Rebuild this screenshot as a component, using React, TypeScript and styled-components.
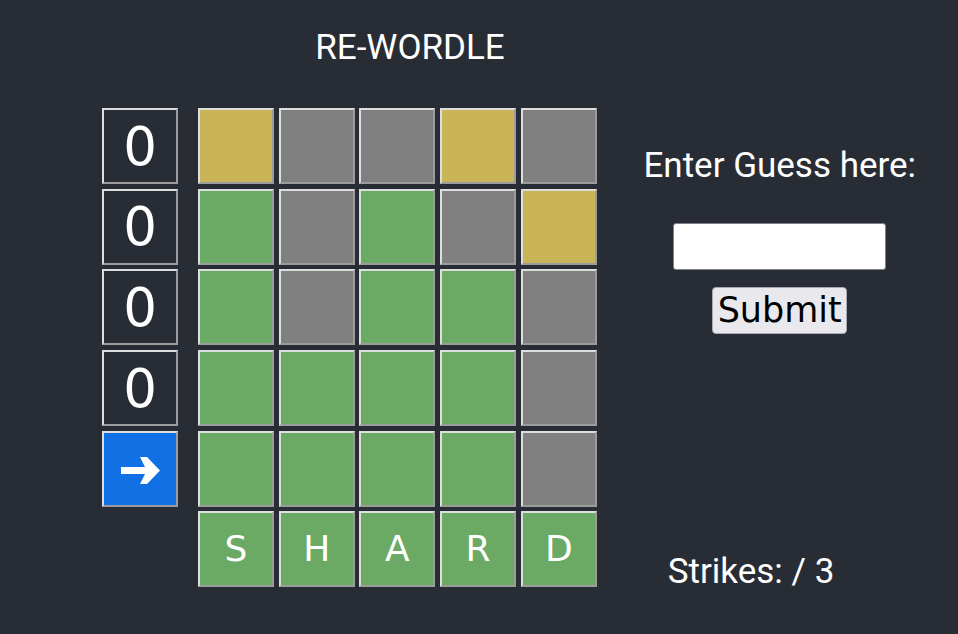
import { FC } from "react";
import styled, { createGlobalStyle } from "styled-components";

const GlobalStyle = createGlobalStyle`
  html, body {
    margin: 0;
    padding: 0;
    background: #282c34;
  }
  body {
    font-family: Roboto, "Noto Sans", sans-serif;
    color: #ffffff;
  }
`;

type Tone = "green" | "yellow" | "gray";

const toneColor: Record<Tone, string> = {
  green: "#6aaa64",
  yellow: "#c9b458",
  gray: "#808080",
};

const Page = styled.main`
  width: 958px;
  min-height: 634px;
  padding-top: 27px;
  box-sizing: border-box;
`;

const Header = styled.h1`
  width: 820px;
  margin: 0;
  text-align: center;
  font-size: 35px;
  font-weight: 400;
  line-height: normal;
`;

const Main = styled.section`
  display: flex;
  flex-direction: row;
  align-items: stretch;
  margin-top: 40px;
  padding-left: 102px;
`;

const Board = styled.div`
  display: flex;
  flex-direction: row;
  align-items: flex-start;
  gap: 20px;
`;

const ScoreColumn = styled.div`
  display: flex;
  flex-direction: column;
  gap: 4.7px;
`;

const Cell = styled.div`
  width: 76px;
  height: 76px;
  box-sizing: border-box;
  border: 2px solid;
  border-color: #dedede #9c9c9c #9c9c9c #dedede;
  display: flex;
  align-items: center;
  justify-content: center;
  font-family: "DejaVu Sans", Verdana, sans-serif;
  color: #ffffff;
`;

const ScoreBox = styled(Cell)<{ $active?: boolean }>`
  background: ${({ $active }) => ($active ? "#1170e3" : "transparent")};
  font-size: 53px;
  line-height: 1;
`;

const Grid = styled.div`
  display: grid;
  grid-template-columns: repeat(5, 76px);
  grid-auto-rows: 76px;
  gap: 4.7px;
`;

const Tile = styled(Cell)<{ $tone: Tone }>`
  background: ${({ $tone }) => toneColor[$tone]};
  font-size: 36px;
  line-height: 1;
`;

const Panel = styled.aside`
  width: 280px;
  margin-left: 43px;
  display: flex;
  flex-direction: column;
  align-items: center;
  padding-top: 37px;
`;

const Prompt = styled.label`
  font-size: 35px;
  line-height: normal;
`;

const GuessInput = styled.input`
  width: 213px;
  height: 47px;
  box-sizing: border-box;
  margin-top: 37px;
  background: #ffffff;
  border: 1px solid #80808e;
  border-radius: 3px;
  font-size: 24px;
`;

const SubmitButton = styled.button`
  width: 135px;
  height: 47px;
  box-sizing: border-box;
  margin-top: 17px;
  padding: 0;
  background: #e9e9ed;
  border: 1px solid #a9a9b2;
  border-radius: 4px;
  color: #000000;
  font-family: "DejaVu Sans", Verdana, sans-serif;
  font-size: 35px;
  line-height: 1;
`;

const Strikes = styled.p`
  align-self: flex-start;
  margin: auto 0 -5px 28px;
  font-size: 35px;
  line-height: normal;
`;

const ArrowIcon: FC = () => (
  <svg width="72" height="72" viewBox="0 0 72 72" aria-hidden="true">
    <path
      d="M17 34 H41 L36 24 H43 L56 37.5 L43 51 H36 L41 41 H17 Z"
      fill="#ffffff"
    />
  </svg>
);

const rows: Tone[][] = [
  ["yellow", "gray", "gray", "yellow", "gray"],
  ["green", "gray", "green", "gray", "yellow"],
  ["green", "gray", "green", "green", "gray"],
  ["green", "green", "green", "green", "gray"],
  ["green", "green", "green", "green", "gray"],
];

const answer = ["S", "H", "A", "R", "D"];
const scores = [0, 0, 0, 0];

const App: FC = () => {
  return (
    <>
      <GlobalStyle />
      <Page>
        <Header>RE-WORDLE</Header>
        <Main>
          <Board>
            <ScoreColumn>
              {scores.map((s, i) => (
                <ScoreBox key={i}>{s}</ScoreBox>
              ))}
              <ScoreBox $active>
                <ArrowIcon />
              </ScoreBox>
            </ScoreColumn>
            <Grid>
              {rows.map((row, r) =>
                row.map((tone, c) => <Tile key={`${r}-${c}`} $tone={tone} />)
              )}
              {answer.map((letter) => (
                <Tile key={letter} $tone="green">
                  {letter}
                </Tile>
              ))}
            </Grid>
          </Board>
          <Panel>
            <Prompt htmlFor="guess">Enter Guess here:</Prompt>
            <GuessInput id="guess" type="text" />
            <SubmitButton>Submit</SubmitButton>
            <Strikes>Strikes: / 3</Strikes>
          </Panel>
        </Main>
      </Page>
    </>
  );
};

export default App;
